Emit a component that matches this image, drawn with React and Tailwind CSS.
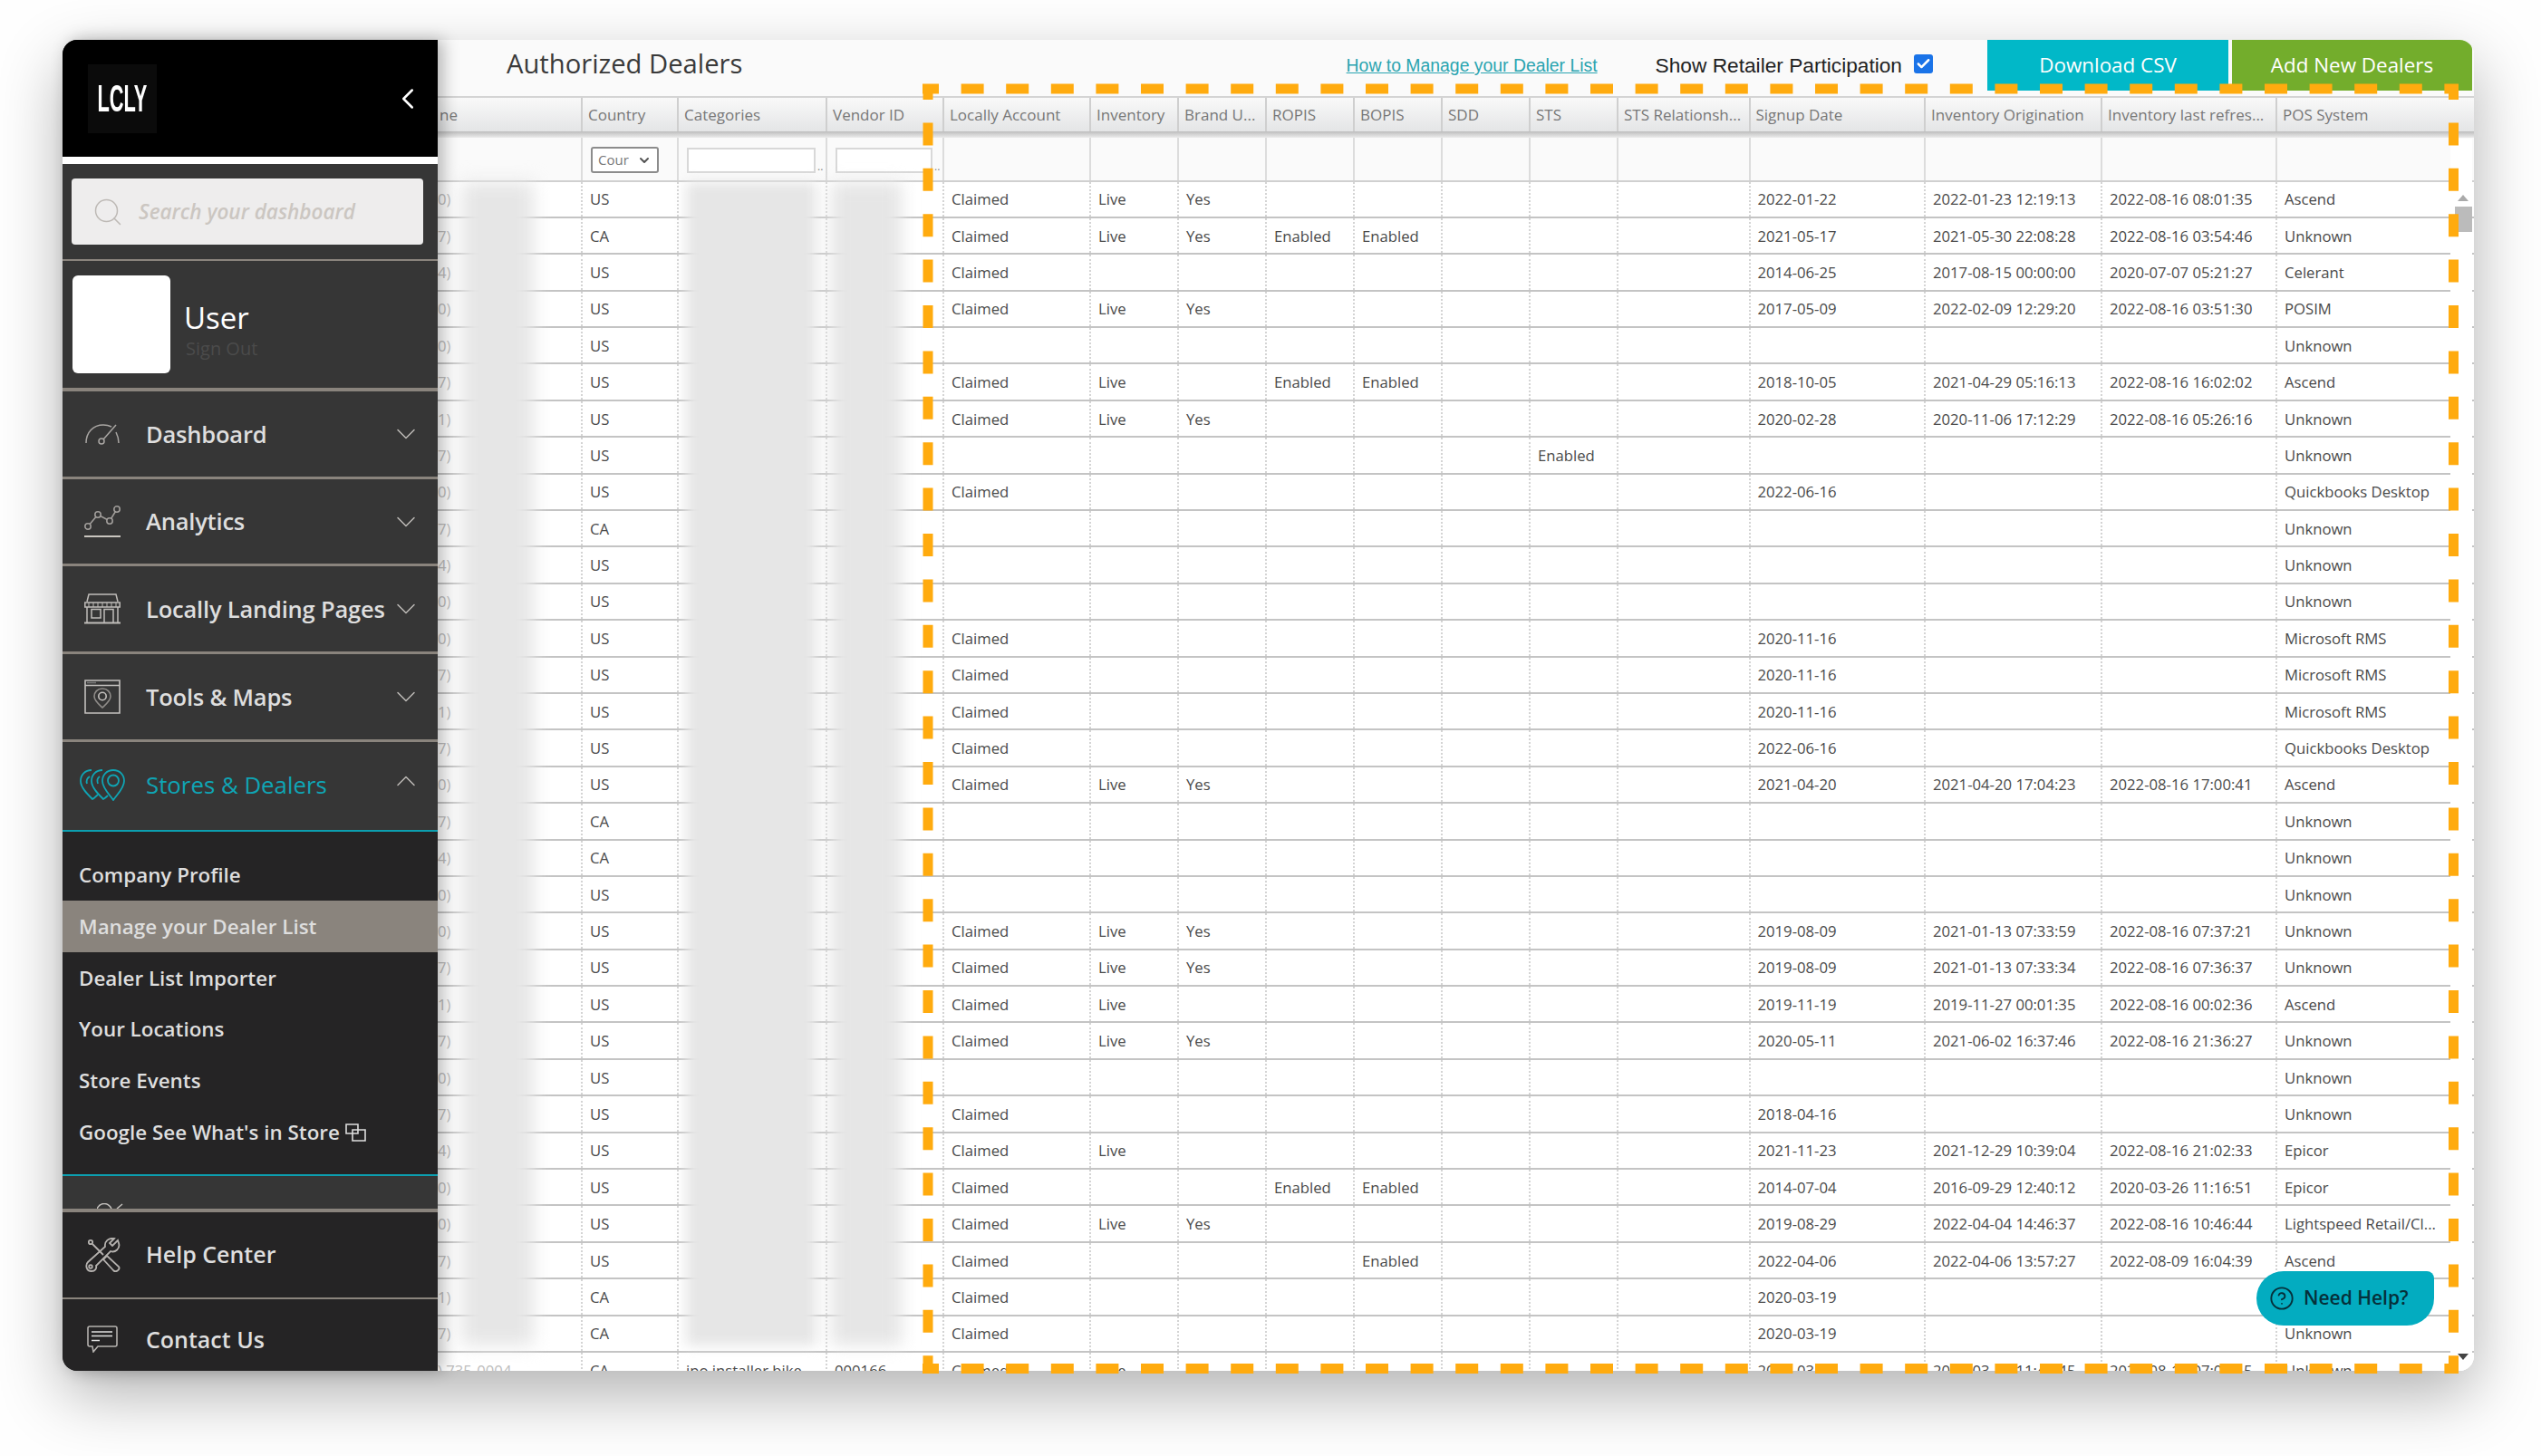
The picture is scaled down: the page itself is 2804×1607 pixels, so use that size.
import React from 'react';
import { ChevronDown, ChevronUp, ChevronLeft, Search, CircleHelp, Check } from 'lucide-react';

const gridCols =
  'grid grid-cols-[158px_106px_164px_129px_162px_97px_97px_97px_97px_97px_97px_145.5px_193.5px_195px_193px_193px]';

const headers = [
  'ne', 'Country', 'Categories', 'Vendor ID', 'Locally Account', 'Inventory', 'Brand U...', 'ROPIS', 'BOPIS',
  'SDD', 'STS', 'STS Relationsh...', 'Signup Date', 'Inventory Origination', 'Inventory last refres...', 'POS System',
];

// country, account, inventory, brand, ropis, bopis, sts, signup, origination, refreshed, pos
const rows = [
  ['US', 'Claimed', 'Live', 'Yes', '', '', '', '2022-01-22', '2022-01-23 12:19:13', '2022-08-16 08:01:35', 'Ascend'],
  ['CA', 'Claimed', 'Live', 'Yes', 'Enabled', 'Enabled', '', '2021-05-17', '2021-05-30 22:08:28', '2022-08-16 03:54:46', 'Unknown'],
  ['US', 'Claimed', '', '', '', '', '', '2014-06-25', '2017-08-15 00:00:00', '2020-07-07 05:21:27', 'Celerant'],
  ['US', 'Claimed', 'Live', 'Yes', '', '', '', '2017-05-09', '2022-02-09 12:29:20', '2022-08-16 03:51:30', 'POSIM'],
  ['US', '', '', '', '', '', '', '', '', '', 'Unknown'],
  ['US', 'Claimed', 'Live', '', 'Enabled', 'Enabled', '', '2018-10-05', '2021-04-29 05:16:13', '2022-08-16 16:02:02', 'Ascend'],
  ['US', 'Claimed', 'Live', 'Yes', '', '', '', '2020-02-28', '2020-11-06 17:12:29', '2022-08-16 05:26:16', 'Unknown'],
  ['US', '', '', '', '', '', 'Enabled', '', '', '', 'Unknown'],
  ['US', 'Claimed', '', '', '', '', '', '2022-06-16', '', '', 'Quickbooks Desktop'],
  ['CA', '', '', '', '', '', '', '', '', '', 'Unknown'],
  ['US', '', '', '', '', '', '', '', '', '', 'Unknown'],
  ['US', '', '', '', '', '', '', '', '', '', 'Unknown'],
  ['US', 'Claimed', '', '', '', '', '', '2020-11-16', '', '', 'Microsoft RMS'],
  ['US', 'Claimed', '', '', '', '', '', '2020-11-16', '', '', 'Microsoft RMS'],
  ['US', 'Claimed', '', '', '', '', '', '2020-11-16', '', '', 'Microsoft RMS'],
  ['US', 'Claimed', '', '', '', '', '', '2022-06-16', '', '', 'Quickbooks Desktop'],
  ['US', 'Claimed', 'Live', 'Yes', '', '', '', '2021-04-20', '2021-04-20 17:04:23', '2022-08-16 17:00:41', 'Ascend'],
  ['CA', '', '', '', '', '', '', '', '', '', 'Unknown'],
  ['CA', '', '', '', '', '', '', '', '', '', 'Unknown'],
  ['US', '', '', '', '', '', '', '', '', '', 'Unknown'],
  ['US', 'Claimed', 'Live', 'Yes', '', '', '', '2019-08-09', '2021-01-13 07:33:59', '2022-08-16 07:37:21', 'Unknown'],
  ['US', 'Claimed', 'Live', 'Yes', '', '', '', '2019-08-09', '2021-01-13 07:33:34', '2022-08-16 07:36:37', 'Unknown'],
  ['US', 'Claimed', 'Live', '', '', '', '', '2019-11-19', '2019-11-27 00:01:35', '2022-08-16 00:02:36', 'Ascend'],
  ['US', 'Claimed', 'Live', 'Yes', '', '', '', '2020-05-11', '2021-06-02 16:37:46', '2022-08-16 21:36:27', 'Unknown'],
  ['US', '', '', '', '', '', '', '', '', '', 'Unknown'],
  ['US', 'Claimed', '', '', '', '', '', '2018-04-16', '', '', 'Unknown'],
  ['US', 'Claimed', 'Live', '', '', '', '', '2021-11-23', '2021-12-29 10:39:04', '2022-08-16 21:02:33', 'Epicor'],
  ['US', 'Claimed', '', '', 'Enabled', 'Enabled', '', '2014-07-04', '2016-09-29 12:40:12', '2020-03-26 11:16:51', 'Epicor'],
  ['US', 'Claimed', 'Live', 'Yes', '', '', '', '2019-08-29', '2022-04-04 14:46:37', '2022-08-16 10:46:44', 'Lightspeed Retail/Cl...'],
  ['US', 'Claimed', '', '', '', 'Enabled', '', '2022-04-06', '2022-04-06 13:57:27', '2022-08-09 16:04:39', 'Ascend'],
  ['CA', 'Claimed', '', '', '', '', '', '2020-03-19', '', '', 'Unknown'],
  ['CA', 'Claimed', '', '', '', '', '', '2020-03-19', '', '', 'Unknown'],
  ['CA', 'Claimed', 'Live', '', '', '', '', '2020-03-19', '2020-03-19 11:44:45', '2022-08-16 07:02:45', 'Unknown'],
];

const phoneStubs = ['0)', '7)', '4)', '0)', '0)', '7)', '1)', '7)'];

function GaugeIcon() {
  return (
    <svg width="38" height="24" viewBox="0 0 38 24" fill="none" stroke="#a9a6a3" strokeWidth="1.5">
      <path d="M1 22 C1 10 9 2 20 2 C24 2 27 3 29 4" />
      <path d="M34 10 C36 14 37 18 37 22" />
      <circle cx="18" cy="20" r="3" />
      <path d="M20 18 L34 2" />
    </svg>
  );
}

function AnalyticsIcon() {
  return (
    <svg width="40" height="36" viewBox="0 0 40 36" fill="none" stroke="#a09d9a" strokeWidth="1.6">
      <path d="M0 34 H40" stroke="#c9c5bf" strokeWidth="2" />
      <path d="M4 23 L15 10 L28 17 L36 4" />
      <circle cx="4" cy="23" r="3.2" fill="#363636" />
      <circle cx="15" cy="10" r="3.2" fill="#363636" />
      <circle cx="28" cy="17" r="3.2" fill="#363636" />
      <circle cx="36" cy="4" r="3.2" fill="#363636" />
    </svg>
  );
}

function StoreIcon() {
  return (
    <svg width="40" height="34" viewBox="0 0 40 34" fill="none" stroke="#c0bdba" strokeWidth="1.5">
      <path d="M3 9 L5 1 H35 L37 9" />
      <path d="M0.8 10 H39.2 V15 H0.8 Z" />
      <path d="M5 10 V15 M10 10 V15 M15 10 V15 M20 10 V15 M25 10 V15 M30 10 V15 M35 10 V15" strokeWidth="1" />
      <path d="M3 15 V32 M37 15 V32" />
      <path d="M0 32.5 H40" strokeWidth="2" />
      <path d="M8 17.5 H18 V27 H8 Z" />
      <path d="M22 32 V17.5 H32 V32" />
    </svg>
  );
}

function MapIcon() {
  return (
    <svg width="40" height="38" viewBox="0 0 40 38" fill="none" stroke="#c4c1be" strokeWidth="1.6">
      <path d="M1 1 H39 V37 H1 Z" />
      <path d="M1 6.5 H39" />
      <path d="M3 3.5 H13" stroke="#777" />
      <path d="M20 10 C14.5 10 11 14 11 18.5 C11 23.5 17 28 20 31 C23 28 29 23.5 29 18.5 C29 14 25.5 10 20 10 Z" stroke="#8f8c89" />
      <circle cx="20" cy="18.5" r="4.2" />
    </svg>
  );
}

function PinsIcon() {
  return (
    <svg width="50" height="35" viewBox="0 0 50 35" fill="none" stroke="#0fa5b5" strokeWidth="1.8">
      <path d="M13 1 C6 1 1 6 1 13 C1 20 8 27 14 33 C16 32 18 30 20 28" />
      <path d="M11 8 C8 10 7 13 8 16" />
      <path d="M25 1 C18 1 13 6 13 13 C13 20 20 27 26 33 C28 32 29 31 31 29" />
      <path d="M22 8 C19 10 19 13 20 16" />
      <path d="M37 1 C30 1 25 6 25 13 C25 21 33 28 37 34 C41 28 49 21 49 13 C49 6 44 1 37 1 Z" />
      <circle cx="37" cy="12.5" r="6" />
    </svg>
  );
}

function ToolsIcon() {
  return (
    <svg width="40" height="38" viewBox="0 0 40 38" fill="none" stroke="#b5b2af" strokeWidth="1.8">
      <circle cx="7" cy="5" r="2.2" />
      <path d="M9 7 L21 19" />
      <path d="M21 24 L25 20 L38 32 C40 35 35 39 32 36 Z" />
      <path d="M37 3 L31 9 L28 6 L33 1 C27 0 22 4 23 10 L4 27 C1 30 2 37 8 37 C12 37 14 34 13 31 L29 15 C34 17 40 12 38 6 Z" />
      <circle cx="7" cy="32" r="1.8" />
    </svg>
  );
}

function ChatIcon() {
  return (
    <svg width="34" height="30" viewBox="0 0 34 30" fill="none" stroke="#b5b2af" strokeWidth="1.6">
      <path d="M3 1 H31 C32 1 33 2 33 3 V21 C33 22 32 23 31 23 H12 L7 29 L6 23 H3 C2 23 1 22 1 21 V3 C1 2 2 1 3 1 Z" />
      <path d="M5 7 H28 M5 11.5 H28 M5 16.5 H14" stroke="#e0e0e0" />
    </svg>
  );
}

function ExternalIcon() {
  return (
    <svg width="23" height="20" viewBox="0 0 23 20" fill="none" stroke="#dedede" strokeWidth="1.6">
      <path d="M1 1 H14 V11 H1 Z" />
      <path d="M8 7 H22 V19 H8 Z" />
    </svg>
  );
}

function MenuRow({ icon, label }) {
  return (
    <div className="flex h-[96.7px] shrink-0 items-center border-b-[3px] border-[#8a847d] text-[#dedede]">
      <div className="flex w-[92px] justify-center pr-[4px]">{icon}</div>
      <span className="flex-1 text-[25.5px] font-semibold tracking-[-0.2px]">{label}</span>
      <ChevronDown size={36} strokeWidth={1} className="mr-[17px] text-[#bdbab7]" />
    </div>
  );
}

function Sidebar() {
  return (
    <aside className="relative z-20 flex h-full w-[414px] shrink-0 flex-col overflow-hidden rounded-l-[16px] bg-[#363636] font-['Open_Sans',sans-serif] shadow-[6px_0_18px_rgba(0,0,0,0.28)]">
      <div className="flex h-[129px] shrink-0 items-center justify-between bg-black pr-[14px] pl-[28px]">
        <div className="flex h-[76px] w-[76px] items-center justify-center bg-[#0b0b0b]">
          <span className="scale-x-[0.52] font-['Liberation_Sans',sans-serif] text-[42px] leading-none font-bold whitespace-nowrap text-white">
            LCLY
          </span>
        </div>
        <ChevronLeft size={38} strokeWidth={1.6} className="text-white" />
      </div>
      <div className="h-[8px] shrink-0 bg-white" />

      <div className="shrink-0 border-b-[2px] border-[#8a847d] px-[10px] pt-[16px] pb-[16px]">
        <div className="flex h-[73px] w-[388px] items-center gap-[16px] rounded-[4px] bg-[#eeeded] pl-[22px]">
          <Search size={36} strokeWidth={1} className="text-[#bdb9b5]" />
          <span className="text-[22.5px] font-semibold text-[#cbc6c1] italic">Search your dashboard</span>
        </div>
      </div>

      <div className="flex h-[144px] shrink-0 items-center gap-[15px] border-b-[4px] border-[#8a847d] px-[11px]">
        <div className="h-[108px] w-[108px] rounded-[6px] bg-white" />
        <div className="mt-[11px] flex flex-col">
          <span className="text-[33px] leading-[42px] text-white">User</span>
          <span className="pl-[2px] text-[20px] leading-[26px] text-[#4b4b4b]">Sign Out</span>
        </div>
      </div>

      <MenuRow icon={<GaugeIcon />} label="Dashboard" />
      <MenuRow icon={<AnalyticsIcon />} label="Analytics" />
      <MenuRow icon={<StoreIcon />} label="Locally Landing Pages" />
      <MenuRow icon={<MapIcon />} label="Tools & Maps" />

      <div className="flex h-[99px] shrink-0 items-center border-b-[2px] border-[#0c9fb0] pb-[2px] text-[#0fa5b5]">
        <div className="flex w-[92px] justify-center pr-[4px]">
          <PinsIcon />
        </div>
        <span className="flex-1 text-[25.8px]">Stores &amp; Dealers</span>
        <ChevronUp size={36} strokeWidth={1} className="mr-[17px] -translate-y-[4px] text-[#bdbab7]" />
      </div>

      <div className="flex h-[380px] shrink-0 flex-col border-b-[2px] border-[#0c9fb0] bg-[#252425] pt-[20px] text-[22.4px] font-semibold text-[#dedede]">
        <div className="flex h-[56.7px] items-center pl-[18px]">Company Profile</div>
        <div className="flex h-[56.7px] items-center bg-[#8a847d] pl-[18px]">Manage your Dealer List</div>
        <div className="flex h-[56.7px] items-center pl-[18px]">Dealer List Importer</div>
        <div className="flex h-[56.7px] items-center pl-[18px]">Your Locations</div>
        <div className="flex h-[56.7px] items-center pl-[18px]">Store Events</div>
        <div className="flex h-[56.7px] items-center gap-[6px] pl-[18px]">
          Google See What's in Store
          <ExternalIcon />
        </div>
      </div>

      {/* next menu item, mostly hidden behind the pinned footer */}
      <div className="flex h-[36px] shrink-0 items-end pl-[38px]">
        <svg width="30" height="6" viewBox="0 0 30 6" fill="none" stroke="#c4c1be" strokeWidth="1.5">
          <path d="M0 6 C2 2 5 0.5 8 0.5 C11 0.5 14 2 16 6" />
          <path d="M22 6 L28 1" />
        </svg>
      </div>

      <div className="flex flex-1 flex-col border-t-[4px] border-[#8a847d] bg-[#252425] text-[25px] font-semibold text-[#dedede]">
        <div className="flex h-[96px] shrink-0 items-center border-b-[2px] border-[#8a847d]">
          <div className="flex w-[92px] justify-center pr-[4px]">
            <ToolsIcon />
          </div>
          Help Center
        </div>
        <div className="flex flex-1 items-center pt-[10px]">
          <div className="flex w-[92px] justify-center pr-[4px]">
            <ChatIcon />
          </div>
          Contact Us
        </div>
      </div>
    </aside>
  );
}

function TopBar() {
  return (
    <div className="flex h-[62px] shrink-0 items-start bg-[#fafafa]">
      <h1 className="mt-[6px] ml-[76px] text-[29.2px] leading-[40px] text-[#3a3a3a]">Authorized Dealers</h1>
      <a className="mt-[18px] ml-auto font-['Liberation_Sans',sans-serif] text-[19.4px] leading-[20px] text-[#2aa4b0] underline">
        How to Manage your Dealer List
      </a>
      <span className="mt-[16px] ml-[64px] font-['Liberation_Sans',sans-serif] text-[22.7px] leading-[24px] text-[#222]">
        Show Retailer Participation
      </span>
      <span className="mt-[16px] mr-[60px] ml-[13px] flex h-[21px] w-[21px] items-center justify-center rounded-[3px] bg-[#1a73e8]">
        <Check size={17} strokeWidth={3.5} className="text-white" />
      </span>
      <div className="mr-[2px] flex h-[56px] gap-[4px]">
        <button className="w-[266px] bg-[#01b8c8] text-[22.4px] text-white">Download CSV</button>
        <button className="w-[265px] rounded-tr-[10px] bg-[#73ad2c] text-[22.4px] text-white">Add New Dealers</button>
      </div>
    </div>
  );
}

function Table() {
  return (
    <div className="relative flex-1 overflow-hidden text-[16.7px]">
      <div className="w-[2247px]">
        <div className="h-[39px] border-t-[2px] border-[#d4d4d4] bg-gradient-to-b from-[#f9f9f9] to-[#e4e5e6]">
          <div className={gridCols}>
            {headers.map((h, i) => (
              <div
                key={h}
                className={`flex h-[37px] items-center overflow-hidden text-[17px] whitespace-nowrap text-[#777] ${
                  i === 0 ? 'pl-[2px]' : 'border-l-[2px] border-[#cfcfcf] pl-[6px]'
                }`}
              >
                {h}
              </div>
            ))}
          </div>
        </div>
        <div className="h-[7px] bg-gradient-to-b from-[#bdbdbd] to-[#ececec]" />
        <div className={`${gridCols} h-[48.5px] border-b-[2px] border-[#d0d0d0] bg-[#fafafa]`}>
          {headers.map((h, i) => (
            <div key={h} className={`relative ${i === 0 ? '' : 'border-l-[2px] border-[#dcdcdc]'}`}>
              {i === 1 && (
                <div className="mt-[10px] ml-[9px] flex h-[29px] w-[75px] items-center justify-between rounded-[3px] border-[2px] border-[#8c8c8c] bg-white px-[6px] text-[15px] text-[#777]">
                  Cour
                  <ChevronDown size={16} strokeWidth={3} className="text-[#555]" />
                </div>
              )}
              {(i === 2 || i === 3) && (
                <div className="mt-[11px] flex items-end gap-[2px] pl-[9px]">
                  <div
                    className={`h-[28px] border-[2px] border-[#d8d8d8] bg-white ${
                      i === 2 ? 'w-[142px]' : 'w-[107px]'
                    }`}
                  />
                  <span className="text-[12px] leading-[14px] text-[#888]">..</span>
                </div>
              )}
            </div>
          ))}
        </div>
        {rows.map((r, ri) => {
          const isLast = ri === rows.length - 1;
          const cells = [
            isLast ? ') 735-0004' : phoneStubs[ri % phoneStubs.length],
            r[0],
            isLast ? 'ipo installer bike' : '',
            isLast ? '000166' : '',
            r[1], r[2], r[3], r[4], r[5], '', r[6], '', r[7], r[8], r[9], r[10],
          ];
          return (
            <div key={ri} className={`${gridCols} h-[40.4px] border-b-[2px] border-[#c4c4c4] bg-white`}>
              {cells.map((c, i) => (
                <div
                  key={i}
                  className={`flex items-center overflow-hidden whitespace-nowrap ${
                    i === 0
                      ? 'text-[#bdbdbd]'
                      : 'border-l-[2px] border-dotted border-[#d4d4d4] pl-[8px] text-[#4a4a4a]'
                  }`}
                >
                  {c}
                </div>
              ))}
            </div>
          );
        })}
      </div>

      {/* blurred out columns */}
      <div className="absolute top-[95px] left-[26px] h-[1284px] w-[80px] bg-[#e6e6e6] blur-[10px]" />
      <div className="absolute top-[95px] left-[274px] h-[1284px] w-[144px] bg-[#e6e6e6] blur-[7px]" />
      <div className="absolute top-[95px] left-[434px] h-[1284px] w-[78px] bg-[#e6e6e6] blur-[9px]" />

      {/* scrollbar */}
      <div className="absolute top-[47px] right-[2px] bottom-0 w-[24px] bg-white">
        <div className="absolute top-[62px] left-[8px] h-0 w-0 border-x-[6px] border-b-[7px] border-x-transparent border-b-[#aaa]" />
        <div className="absolute top-[75px] left-[5px] h-[28px] w-[19px] bg-[#bbb]" />
        <div className="absolute bottom-[12px] left-[8px] h-0 w-0 border-x-[6px] border-t-[7px] border-x-transparent border-t-[#444]" />
      </div>

      <div className="absolute top-[1297px] right-[44px] flex h-[60px] w-[196px] items-center gap-[10px] rounded-[30px] rounded-tr-[8px] bg-[#03acc0] pl-[14px] text-[21px] font-semibold text-[#06303a]">
        <CircleHelp size={28} strokeWidth={1.6} />
        Need Help?
      </div>
    </div>
  );
}

// orange dashed frame drawn over the card
function DashedFrame() {
  return (
    <svg className="absolute top-0 left-0 z-30" width="2804" height="1607" fill="none" stroke="#ffab0f" strokeWidth="11">
      <line x1="1018" y1="98" x2="2713" y2="98" strokeDasharray="25 24.6" strokeDashoffset="7" />
      <line x1="1018" y1="1510.5" x2="2713" y2="1510.5" strokeDasharray="25 24.6" strokeDashoffset="7" />
      <line x1="1024" y1="93" x2="1024" y2="1516" strokeDasharray="25 25.4" strokeDashoffset="8" />
      <line x1="2707.5" y1="93" x2="2707.5" y2="1516" strokeDasharray="25 25.4" strokeDashoffset="8" />
    </svg>
  );
}

export default function App() {
  return (
    <div className="relative h-[1607px] w-[2804px] overflow-hidden bg-[#fefefe] pt-[44px] pl-[69px] font-['Open_Sans',sans-serif]">
      <div className="flex h-[1469px] w-[2661px] rounded-[16px] bg-white shadow-[0_26px_70px_rgba(0,0,0,0.3)]">
        <Sidebar />
        <main className="flex min-w-0 flex-1 flex-col overflow-hidden rounded-r-[16px]">
          <TopBar />
          <Table />
        </main>
      </div>
      <DashedFrame />
    </div>
  );
}
